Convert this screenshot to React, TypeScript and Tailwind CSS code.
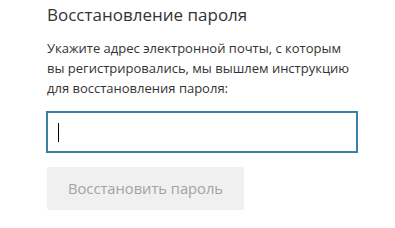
import React from 'react';

const App: React.FC = () => {
    return (
        <div className="w-[395px] h-[228px] bg-white overflow-hidden" style={{ fontFamily: '"Open Sans", "Noto Sans", sans-serif' }}>
            <div className="ml-[46px] w-[312px] pt-[3px]">
                <h1 className="text-[17px] leading-[24px] text-[#333333] font-normal pl-[1px]">Восстановление пароля</h1>
                <p className="mt-[11px] text-[13px] leading-[20px] text-[#333333] pl-[1px]">
                    Укажите адрес электронной почты, с которым вы регистрировались, мы вышлем инструкцию для восстановления пароля:
                </p>
                <div className="mt-[13px] h-[42px] border-2 border-[#3b7ea6] bg-white flex items-center pl-[10px]">
                    <span className="block w-[1px] h-[19px] bg-black" />
                </div>
                <button className="mt-[14px] ml-[1px] w-[197px] h-[43px] rounded-[2px] bg-[#f0f0f0] text-[#a3a3a3] text-[14.7px]">
                    Восстановить пароль
                </button>
            </div>
        </div>
    );
};

export default App;
